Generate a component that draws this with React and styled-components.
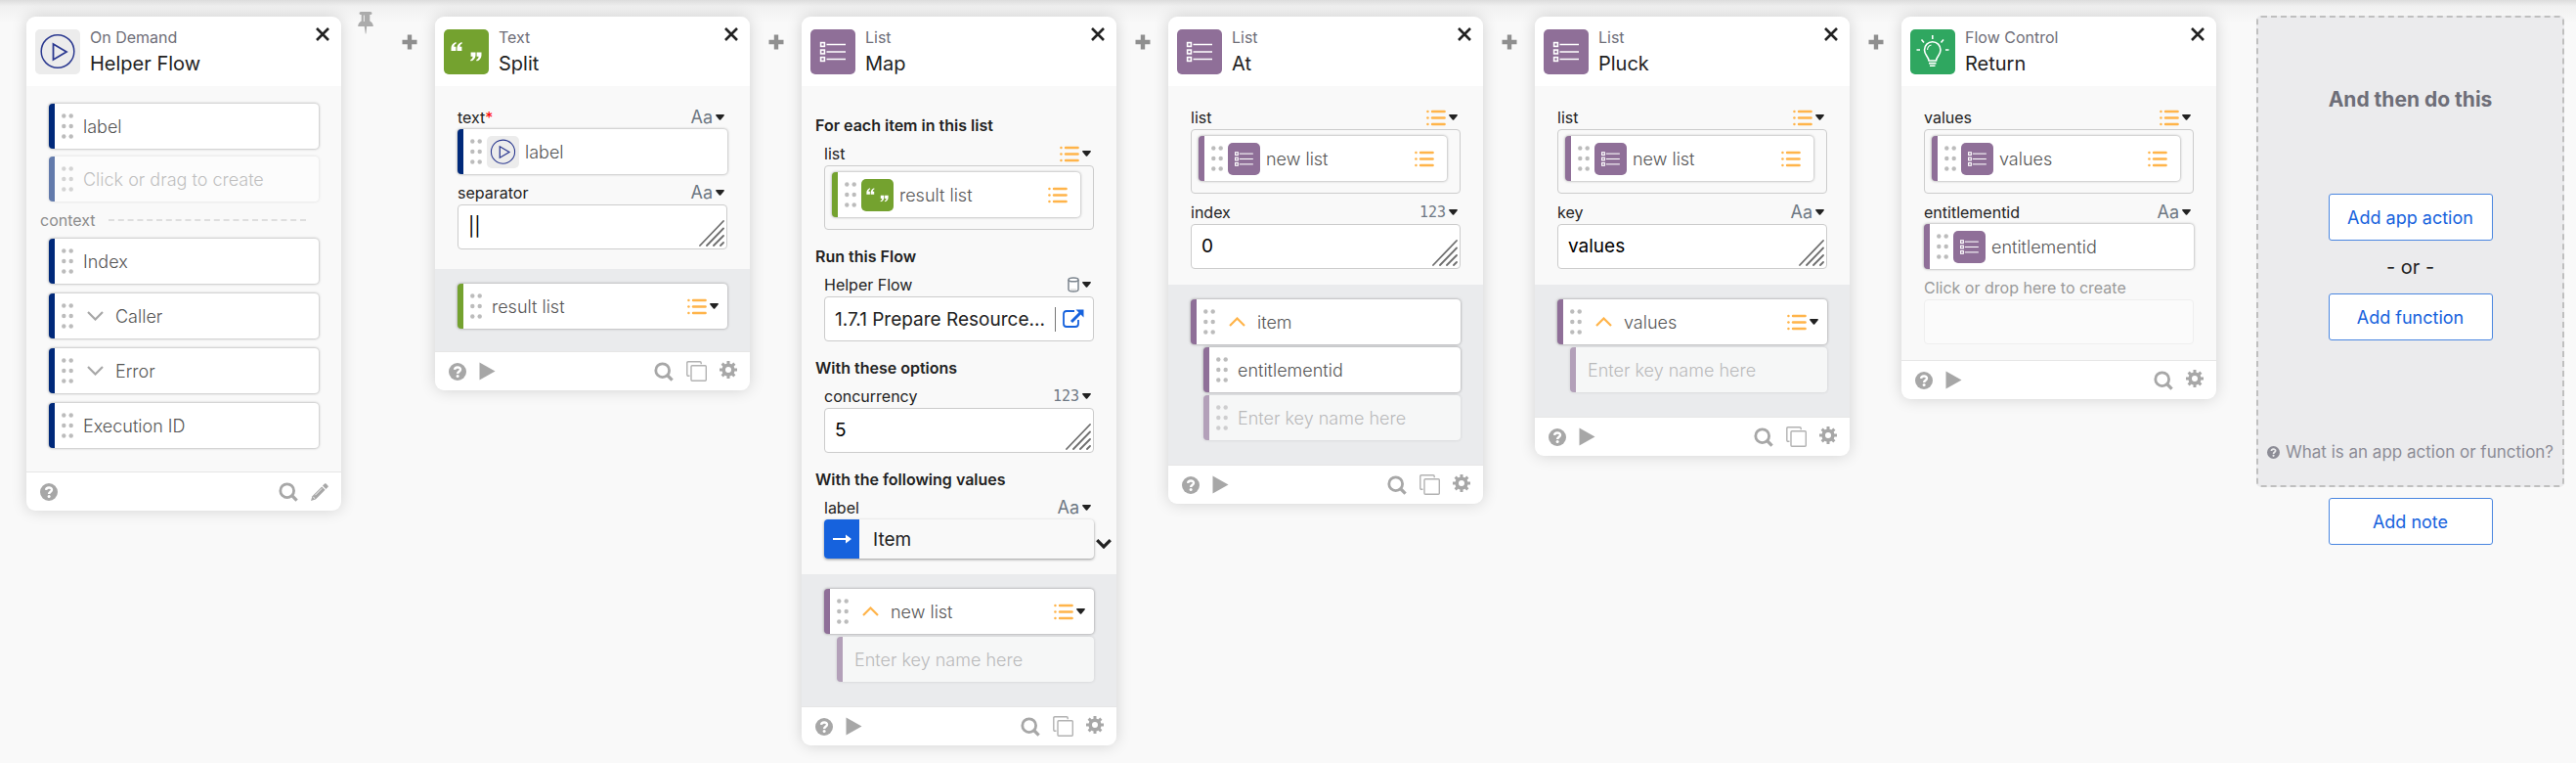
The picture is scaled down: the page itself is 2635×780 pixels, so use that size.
import React from "react";
import styled, { createGlobalStyle, css } from "styled-components";

const NAVY = "#00297a";
const GREEN = "#74a22f";
const PURPLE = "#8f6f98";
const ORANGE = "#ffb44a";
const BLUE = "#1662dd";
const GREY = "#a7a7a7";

const GlobalStyle = createGlobalStyle`
  *, *::before, *::after { box-sizing: border-box; }
  body {
    margin: 0;
    background: #f9f9f9;
    color: #222;
    font-family: Inter, "Liberation Sans", sans-serif;
    font-size: 16px;
  }
  button, input, select, textarea { font: inherit; color: inherit; }
  svg { display: block; flex: none; }
`;

/* ---------- page ---------- */

const Page = styled.main`
  min-height: 100vh;
  overflow-x: auto;
  background: linear-gradient(#dcdcdc, #f0f0f0 6px, #f9f9f9 24px);
`;

const Canvas = styled.div`
  display: flex;
  align-items: flex-start;
  padding: 16px 12px 12px 27px;
`;

const Connector = styled.div`
  display: flex;
  justify-content: center;
  flex: none;
  width: 53px;
  padding-top: 19px;
`;

const PinSlot = styled(Connector)`
  width: 43px;
  padding: 0 0 0 6px;
  margin-top: -4px;
`;

const IconButton = styled.button`
  display: flex;
  padding: 0;
  border: 0;
  background: none;
  color: ${GREY};
  cursor: pointer;
`;

/* ---------- card ---------- */

const Card = styled.article`
  flex: none;
  width: 322px;
  margin-top: 1px;
  border-radius: 9px;
  background: #fff;
  box-shadow: 0 0 16px rgba(0, 0, 0, 0.16);
`;

const CardHeader = styled.header`
  display: flex;
  align-items: flex-start;
  gap: 10px;
  height: 71px;
  padding: 13px 12px 0 9px;
`;

const HeaderText = styled.div`
  flex: 1;
  margin-top: -2px;
`;

const Category = styled.div`
  line-height: 20px;
  color: #6e6e78;
`;

const Title = styled.h2`
  margin: 4px 0 0;
  font-size: 20px;
  line-height: 26px;
  font-weight: 400;
`;

const AppIcon = styled.span`
  display: flex;
  align-items: center;
  justify-content: center;
  flex: none;
  width: ${(p) => p.$size}px;
  height: ${(p) => p.$size}px;
  border-radius: 5px;
  background: ${(p) => p.$color};
`;

const CardBody = styled.div`
  padding: 13px 23px ${(p) => p.$bottom || 16}px;
  background: #f9f9f9;
`;

const ContextBody = styled.div`
  display: flex;
  flex-direction: column;
  padding: 18px 23px 24px;
  background: #f9f9f9;
`;

const Outputs = styled.div`
  display: flex;
  flex-direction: column;
  gap: 3px;
  padding: 15px 23px ${(p) => p.$bottom || 25}px;
  background: #eaebed;
`;

const CardFooter = styled.footer`
  display: flex;
  align-items: center;
  gap: 13px;
  height: 40px;
  padding: 0 13px 0 14px;
  border-top: 1px solid #e6e6e6;
`;

const Spacer = styled.span`
  flex: 1;
`;

/* ---------- pills ---------- */

const Pill = styled.div`
  display: flex;
  align-items: center;
  height: 46px;
  margin-left: ${(p) => (p.$nested ? 13 : 0)}px;
  padding: 0 ${(p) => (p.$slot ? 13 : 9)}px 0 7px;
  border-left: 6px solid ${(p) => p.$color};
  border-radius: 4px;
  background: #fff;
  color: #555;
  font-size: 18px;
  font-weight: 300;
  box-shadow: 0 0 3px rgba(0, 0, 0, 0.4);
  ${(p) =>
    p.$ghost &&
    css`
      opacity: 0.6;
      box-shadow: 0 0 3px rgba(0, 0, 0, 0.2);
    `}
`;

const PillName = styled.span`
  flex: 1;
  margin-left: ${(p) => p.$gap}px;
  white-space: nowrap;
`;

const PillInput = styled.input`
  flex: 1;
  min-width: 0;
  margin-left: ${(p) => p.$gap}px;
  padding: 0;
  border: 0;
  outline: 0;
  background: none;
  &::placeholder { color: #999; opacity: 1; }
`;

const PillIcon = styled.span`
  display: flex;
  margin-left: 5px;
`;

const Toggle = styled(IconButton)`
  margin-left: 14px;
`;

const ContextList = styled.div`
  display: flex;
  flex-direction: column;
  gap: ${(p) => p.$gap}px;
`;

const ContextDivider = styled.div`
  display: flex;
  align-items: center;
  gap: 13px;
  height: 38px;
  margin: 0 13px 0 -9px;
  color: #8c8c8c;
  &::after {
    content: "";
    flex: 1;
    border-top: 2px dashed #dedede;
  }
`;

/* ---------- fields ---------- */

const SectionHeading = styled.h3`
  display: flex;
  align-items: flex-end;
  height: 37px;
  margin: 0 0 0 -9px;
  font-size: 16px;
  line-height: 20px;
  font-weight: 600;
`;

const FieldHead = styled.div`
  display: flex;
  align-items: flex-end;
  justify-content: space-between;
  height: 31px;
  padding: 0 3px 2px 0;
  line-height: 20px;
`;

const FieldName = styled.label`
  color: ${(p) => (p.$muted ? "#999" : "#222")};
`;

const Required = styled.span`
  color: #f00;
`;

const TypeButton = styled.button`
  display: flex;
  align-items: center;
  gap: 3px;
  height: 20px;
  padding: 0;
  border: 0;
  background: none;
  color: #6e7883;
  cursor: pointer;
`;

const TextType = styled.span`
  font-size: 18px;
`;

const NumberType = styled.span`
  font-family: "DejaVu Sans Mono", monospace;
  font-size: 15px;
`;

const ListSlot = styled.div`
  height: 66px;
  padding: 6px 13px 0 7px;
  border: 1px solid #ccc;
  border-radius: 4px;
`;

const InputBox = styled.div`
  display: flex;
  align-items: center;
  height: 46px;
  padding: 0 2px 0 10px;
  border: 1px solid #ccc;
  border-radius: 4px;
  background: #fff;
  font-size: 19px;
`;

const ValueArea = styled.textarea`
  flex: 1;
  min-width: 0;
  height: 24px;
  padding: 0;
  border: 0;
  outline: 0;
  resize: none;
  overflow: hidden;
  background: none;
  color: #000;
  line-height: 24px;
`;

const Grip = styled.svg`
  align-self: flex-end;
  margin-bottom: 2px;
`;

const FlowPicker = styled.button`
  flex: 1;
  min-width: 0;
  padding: 0;
  border: 0;
  background: none;
  text-align: left;
  white-space: nowrap;
`;

const OpenLink = styled.a`
  display: flex;
  align-items: center;
  height: 25px;
  padding: 0 7px;
  border-left: 1px solid #777;
  color: ${BLUE};
`;

const ItemBox = styled.div`
  position: relative;
  display: flex;
  height: 40px;
  border-radius: 4px;
  background: #f9f9f9;
  box-shadow: 0 1px 3px rgba(0, 0, 0, 0.4);
`;

const ItemArrow = styled.span`
  display: flex;
  align-items: center;
  justify-content: center;
  width: 36px;
  border-radius: 4px 0 0 4px;
  background: ${BLUE};
`;

const ItemSelect = styled.select`
  flex: 1;
  appearance: none;
  padding: 0 14px;
  border: 0;
  outline: 0;
  background: none;
  font-size: 19px;
`;

const ItemChevron = styled.span`
  position: absolute;
  top: 20px;
  left: calc(100% + 2px);
`;

const DropTarget = styled.input`
  display: block;
  width: 100%;
  height: 46px;
  border: 1px solid #efefef;
  border-radius: 4px;
  outline: 0;
  background: #fbfbfb;
`;

/* ---------- next step ---------- */

const NextStep = styled.section`
  display: flex;
  flex: 1 0 314px;
  flex-direction: column;
  align-items: center;
  gap: 11px;
  margin-left: 41px;
`;

const NextPanel = styled.div`
  display: flex;
  flex-direction: column;
  align-items: center;
  width: 100%;
  padding: 71px 0 23px;
  border: 2px dashed #bfbfbf;
  border-radius: 5px;
  background: #ebebed;
`;

const NextTitle = styled.h2`
  margin: 0 0 83px;
  font-size: 21px;
  line-height: 26px;
  font-weight: 700;
  color: #6e6e78;
`;

const Or = styled.span`
  margin: 14px 0;
  font-size: 20px;
  line-height: 26px;
`;

const OutlineButton = styled.button`
  width: 168px;
  height: 48px;
  padding: 0;
  border: 1px solid #4a86e0;
  border-radius: 3px;
  background: #fff;
  color: ${BLUE};
  font-size: 18px;
  cursor: pointer;
`;

const HelpLink = styled.a`
  display: flex;
  align-items: center;
  gap: 6px;
  margin-top: 103px;
  font-size: 17px;
  line-height: 22px;
  color: #8c8c96;
  text-decoration: none;
  white-space: nowrap;
`;

/* ---------- drawings ---------- */

const CloseIcon = () => (
  <svg width="14" height="14" viewBox="0 0 14 14" stroke="#222" strokeWidth="2.6">
    <path d="M1 1L13 13M13 1L1 13" />
  </svg>
);

const PlusIcon = () => (
  <svg width="16" height="16" viewBox="0 0 16 16" stroke="#8f8f8f" strokeWidth="4.4">
    <path d="M8 0.5V15.5M0.5 8H15.5" />
  </svg>
);

const PinIcon = () => (
  <svg width="16" height="23" viewBox="0 0 16 23" fill="#ababab">
    <path d="M3 0H13A1.2 1.2 0 0 1 13 3H12.3V9.5C14.5 10.8 15.8 12.6 15.8 15H0.2C0.2 12.6 1.5 10.8 3.7 9.5V3H3A1.2 1.2 0 0 1 3 0Z" />
    <path d="M6.7 15H9.2L8.4 22.5H7.8Z" />
    <path d="M5.8 3.5H7V10H5.8Z" fill="#e6e6e6" />
  </svg>
);

const DotsIcon = () => (
  <svg width="12" height="26" viewBox="0 0 12 26" fill="#bcbcbc">
    {[2.5, 13, 23.5].map((y) => (
      <g key={y}>
        <circle cx="2.3" cy={y} r="2.2" />
        <circle cx="9.7" cy={y} r="2.2" />
      </g>
    ))}
  </svg>
);

const ListTypeIcon = () => (
  <svg width="20" height="17" viewBox="0 0 20 17" stroke={ORANGE} strokeWidth="2.4" strokeLinecap="round">
    {[2, 8.5, 15].map((y) => (
      <g key={y}>
        <path d={`M6 ${y}H18.6`} />
        <path d={`M1.4 ${y}H1.5`} />
      </g>
    ))}
  </svg>
);

const Caret = () => (
  <svg width="9" height="6" viewBox="0 0 9 6" fill="#222">
    <path d="M0.9 0H8.1C8.9 0 9.2 0.8 8.7 1.3L5.2 5.4Q4.5 6 3.8 5.4L0.3 1.3C-0.2 0.8 0.1 0 0.9 0Z" />
  </svg>
);

const CylinderIcon = () => (
  <svg width="12" height="16" viewBox="0 0 12 16" fill="#fff" stroke="#7b848d" strokeWidth="1.5">
    <path d="M1 3V12.8C1 15.8 11 15.8 11 12.8V3" />
    <path d="M1 3C1 0.2 11 0.2 11 3C11 5.4 1 5.4 1 3Z" />
    <path d="M3 13H9" stroke="#dcdcdc" />
  </svg>
);

const ChevronDown = () => (
  <svg width="17" height="10" viewBox="0 0 17 10" fill="none" stroke={GREY} strokeWidth="2.2">
    <path d="M1 1L8.5 8.5L16 1" />
  </svg>
);

const ChevronUp = () => (
  <svg width="17" height="10" viewBox="0 0 17 10" fill="none" stroke={ORANGE} strokeWidth="2.2">
    <path d="M1 9L8.5 1.5L16 9" />
  </svg>
);

const BoldChevron = () => (
  <svg width="16" height="10" viewBox="0 0 16 10" fill="none" stroke="#222" strokeWidth="3.2">
    <path d="M1.2 1.2L8 8L14.8 1.2" />
  </svg>
);

const GripIcon = () => (
  <Grip width="26" height="27" viewBox="0 0 26 27" stroke="#6f6f6f" strokeWidth="1.8" strokeLinecap="round">
    <path d="M1 26L25 1M8 26L25 8.5M15 26L25 16M22 26L25 23" />
  </Grip>
);

const ArrowIcon = () => (
  <svg width="19" height="10" viewBox="0 0 19 10" fill="#fff">
    <path d="M0 4H13V0.6L19 5L13 9.4V6H0Z" />
  </svg>
);

const ExternalIcon = () => (
  <svg width="22" height="20" viewBox="0 0 22 20" fill="none" stroke={BLUE}>
    <path d="M12 2H4Q1 2 1 5V15Q1 18 4 18H13Q16 18 16 15V11" strokeWidth="1.8" />
    <path d="M9 13L18 4" strokeWidth="3" />
    <path d="M13.5 0.5H21.5V8.5Z" fill={BLUE} stroke="none" />
  </svg>
);

const QuestionIcon = ({ size = 18, cut = "#fff" }) => (
  <svg width={size} height={size} viewBox="0 0 18 18">
    <circle cx="9" cy="9" r="9" fill="currentColor" />
    <path d="M6.1 6.9C6.3 3.7 12 3.6 12 6.7C12 8.7 9.2 8.7 9.1 11" fill="none" stroke={cut} strokeWidth="2.4" />
    <circle cx="9.1" cy="13.6" r="1.5" fill={cut} />
  </svg>
);

const PlayIcon = () => (
  <svg width="17" height="19" viewBox="0 0 17 19" fill="currentColor">
    <path d="M0.5 0.5L16.5 9.5L0.5 18.5Z" />
  </svg>
);

const SearchIcon = () => (
  <svg width="20" height="20" viewBox="0 0 20 20" fill="none" stroke="currentColor" strokeWidth="2.8">
    <circle cx="8.7" cy="8.7" r="6.9" />
    <path d="M13.5 13.5L18.6 18.6" strokeWidth="3.2" />
  </svg>
);

const CopyIcon = () => (
  <svg width="21" height="21" viewBox="0 0 21 21" fill="none" stroke="#b2b2b2" strokeWidth="1.4">
    <path d="M3.5 15.2H2Q0.8 15.2 0.8 14V2Q0.8 0.8 2 0.8H14Q15.2 0.8 15.2 2V3.2" />
    <rect x="5" y="4.8" width="15.3" height="15.4" rx="1" />
  </svg>
);

const GearIcon = () => (
  <svg width="18" height="22" viewBox="0 0 18 22" fill="none" stroke="currentColor">
    <circle cx="9" cy="9" r="4.8" strokeWidth="3.6" />
    {[0, 45, 90, 135].map((a) => (
      <path key={a} d="M9 0V3.6M9 14.4V18" strokeWidth="3" transform={`rotate(${a} 9 9)`} />
    ))}
  </svg>
);

const PencilIcon = () => (
  <svg width="18" height="18" viewBox="0 0 18 18" fill="currentColor">
    <path d="M12 2.6L15.4 6L17.4 4Q18.2 3.2 17.4 2.4L15.6 0.6Q14.8 -0.2 14 0.6Z" />
    <path d="M11.2 3.4L14.6 6.8L4.8 16.6L0 18L1.4 13.2Z" />
    <path d="M11.2 5.4L4.4 12.2M2.2 13.8L4.2 15.8" stroke="#fff" strokeWidth="0.9" />
  </svg>
);

const PlayCircle = ({ size }) => (
  <svg width={size} height={size} viewBox="0 0 46 46" fill="none" stroke="#2b3990" strokeWidth="1.5">
    <circle cx="23" cy="22.5" r="16.8" />
    <path d="M18.5 15V31L32 23Z" strokeWidth="1.8" />
  </svg>
);

const QUOTE_MARK = "M4.8 0C2 0.9 0 3.2 0 6.1V9H4.9V4.7H2.9C2.9 3.1 3.7 2 5.4 1.2Z";

const Quotes = ({ size }) => (
  <svg width={size} height={size} viewBox="0 0 46 46" fill="#fff">
    <path d={QUOTE_MARK} transform="translate(7.5 13)" />
    <path d={QUOTE_MARK} transform="translate(13.5 13)" />
    <path d={QUOTE_MARK} transform="translate(32.5 32.5) rotate(180)" />
    <path d={QUOTE_MARK} transform="translate(38.5 32.5) rotate(180)" />
  </svg>
);

const ListGlyph = ({ size }) => (
  <svg width={size} height={size} viewBox="0 0 46 46" fill="none" stroke="#fff">
    {[15.5, 23, 30.5].map((y) => (
      <g key={y}>
        <rect x="10.6" y={y - 1.9} width="3.8" height="3.8" strokeWidth="1.6" />
        <path d={`M16.5 ${y}H36`} strokeWidth="1.5" />
      </g>
    ))}
  </svg>
);

const Bulb = ({ size }) => (
  <svg width={size} height={size} viewBox="0 0 46 46" fill="none" stroke="#fff" strokeWidth="1.6">
    <path d="M19 32C19 28 14.5 26.5 14.5 21A8.2 8.2 0 0 1 31 21C31 26.5 26.5 28 26.5 32Z" />
    <path d="M17.6 21A5.2 5.2 0 0 1 21.5 16" strokeWidth="1.1" />
    <path d="M19 34.6H26.5M20 37.2H25.5" />
    <path d="M22.8 6V10M11.5 10.5L14 13.5M34 10.5L31.5 13.5M6.5 21H10M36 21H39.5" />
  </svg>
);

const APPS = {
  flow: { color: "#ececec", accent: NAVY, Glyph: PlayCircle },
  text: { color: GREEN, accent: GREEN, Glyph: Quotes },
  list: { color: PURPLE, accent: PURPLE, Glyph: ListGlyph },
  control: { color: "#2fa760", accent: "#2fa760", Glyph: Bulb },
};

/* ---------- composed parts ---------- */

function AppTile({ app, size = 46 }) {
  const { color, Glyph } = APPS[app];
  return (
    <AppIcon $size={size} $color={color}>
      <Glyph size={size} />
    </AppIcon>
  );
}

const CloseButton = styled(IconButton)`
  margin-top: -2px;
`;

function Header({ app, category, title }) {
  return (
    <CardHeader>
      <AppTile app={app} />
      <HeaderText>
        <Category>{category}</Category>
        <Title>{title}</Title>
      </HeaderText>
      <CloseButton type="button" aria-label={`Close ${title}`}>
        <CloseIcon />
      </CloseButton>
    </CardHeader>
  );
}

function Footer({ play = true, copy = true, edit = false }) {
  return (
    <CardFooter>
      <IconButton type="button" aria-label="Help"><QuestionIcon /></IconButton>
      {play && <IconButton type="button" aria-label="Test"><PlayIcon /></IconButton>}
      <Spacer />
      <IconButton type="button" aria-label="Search"><SearchIcon /></IconButton>
      {copy && <IconButton type="button" aria-label="Duplicate"><CopyIcon /></IconButton>}
      {edit ? (
        <IconButton type="button" aria-label="Edit"><PencilIcon /></IconButton>
      ) : (
        <IconButton type="button" aria-label="Settings"><GearIcon /></IconButton>
      )}
    </CardFooter>
  );
}

const TYPE_MARKS = {
  text: <TextType>Aa</TextType>,
  number: <NumberType>123</NumberType>,
  list: <ListTypeIcon />,
  object: <CylinderIcon />,
};

function TypePicker({ type }) {
  return (
    <TypeButton type="button" aria-label={`Type: ${type}`}>
      {TYPE_MARKS[type]}
      <Caret />
    </TypeButton>
  );
}

function FieldLabel({ id, name, type, required }) {
  return (
    <FieldHead>
      <FieldName htmlFor={id}>
        {name}
        {required && <Required>*</Required>}
      </FieldName>
      <TypePicker type={type} />
    </FieldHead>
  );
}

function ValueField({ id, name, type, value }) {
  return (
    <>
      <FieldLabel id={id} name={name} type={type} />
      <InputBox>
        <ValueArea id={id} rows={1} defaultValue={value} />
        <GripIcon />
      </InputBox>
    </>
  );
}

function DataPill({ color, name, app, toggle, listType, slot, nested }) {
  const gap = app ? 6 : toggle ? 12 : 10;
  return (
    <Pill $color={color} $nested={nested} $slot={slot}>
      <DotsIcon />
      {app && <PillIcon><AppTile app={app} size={33} /></PillIcon>}
      {toggle && (
        <Toggle type="button" aria-label={`Toggle ${name}`}>
          {toggle === "up" ? <ChevronUp /> : <ChevronDown />}
        </Toggle>
      )}
      <PillName $gap={gap}>{name}</PillName>
      {listType && (slot ? <ListTypeIcon /> : <TypePicker type="list" />)}
    </Pill>
  );
}

function GhostPill({ color, text, dots, nested }) {
  return (
    <Pill $color={color} $nested={nested} $ghost>
      {dots && <DotsIcon />}
      <PillInput $gap={dots ? 10 : 5} placeholder={text} aria-label={text} />
    </Pill>
  );
}

function ListField({ name, app, item }) {
  return (
    <>
      <FieldLabel name={name} type="list" />
      <ListSlot>
        <DataPill color={APPS[app].accent} app={app} name={item} listType slot />
      </ListSlot>
    </>
  );
}

function AddStep() {
  return (
    <Connector>
      <IconButton type="button" aria-label="Add step"><PlusIcon /></IconButton>
    </Connector>
  );
}

export default function App() {
  return (
    <Page>
      <GlobalStyle />
      <Canvas>
        <Card>
          <Header app="flow" category="On Demand" title="Helper Flow" />
          <ContextBody>
            <ContextList $gap={8}>
              <DataPill color={NAVY} name="label" />
              <GhostPill color={NAVY} text="Click or drag to create" dots />
            </ContextList>
            <ContextDivider>context</ContextDivider>
            <ContextList $gap={10}>
              <DataPill color={NAVY} name="Index" />
              <DataPill color={NAVY} name="Caller" toggle="down" />
              <DataPill color={NAVY} name="Error" toggle="down" />
              <DataPill color={NAVY} name="Execution ID" />
            </ContextList>
          </ContextBody>
          <Footer play={false} copy={false} edit />
        </Card>
        <PinSlot>
          <IconButton type="button" aria-label="Pin"><PinIcon /></IconButton>
        </PinSlot>

        <AddStep />
        <Card>
          <Header app="text" category="Text" title="Split" />
          <CardBody $bottom={20}>
            <FieldLabel name="text" type="text" required />
            <DataPill color={NAVY} app="flow" name="label" />
            <ValueField id="separator" name="separator" type="text" value="||" />
          </CardBody>
          <Outputs $bottom={23}>
            <DataPill color={GREEN} name="result list" listType />
          </Outputs>
          <Footer />
        </Card>

        <AddStep />
        <Card>
          <Header app="list" category="List" title="Map" />
          <CardBody>
            <SectionHeading>For each item in this list</SectionHeading>
            <ListField name="list" app="text" item="result list" />
            <SectionHeading>Run this Flow</SectionHeading>
            <FieldLabel id="helper-flow" name="Helper Flow" type="object" />
            <InputBox>
              <FlowPicker id="helper-flow" type="button">1.7.1 Prepare Resource...</FlowPicker>
              <OpenLink href="#open-flow" aria-label="Open flow"><ExternalIcon /></OpenLink>
            </InputBox>
            <SectionHeading>With these options</SectionHeading>
            <ValueField id="concurrency" name="concurrency" type="number" value="5" />
            <SectionHeading>With the following values</SectionHeading>
            <FieldLabel id="item-label" name="label" type="text" />
            <ItemBox>
              <ItemArrow><ArrowIcon /></ItemArrow>
              <ItemSelect id="item-label" defaultValue="Item">
                <option>Item</option>
              </ItemSelect>
              <ItemChevron><BoldChevron /></ItemChevron>
            </ItemBox>
          </CardBody>
          <Outputs>
            <DataPill color={PURPLE} name="new list" toggle="up" listType />
            <GhostPill color={PURPLE} text="Enter key name here" nested />
          </Outputs>
          <Footer />
        </Card>

        <AddStep />
        <Card>
          <Header app="list" category="List" title="At" />
          <CardBody>
            <ListField name="list" app="list" item="new list" />
            <ValueField id="index" name="index" type="number" value="0" />
          </CardBody>
          <Outputs>
            <DataPill color={PURPLE} name="item" toggle="up" />
            <DataPill color={PURPLE} name="entitlementid" nested />
            <GhostPill color={PURPLE} text="Enter key name here" dots nested />
          </Outputs>
          <Footer />
        </Card>

        <AddStep />
        <Card>
          <Header app="list" category="List" title="Pluck" />
          <CardBody>
            <ListField name="list" app="list" item="new list" />
            <ValueField id="key" name="key" type="text" value="values" />
          </CardBody>
          <Outputs>
            <DataPill color={PURPLE} name="values" toggle="up" listType />
            <GhostPill color={PURPLE} text="Enter key name here" nested />
          </Outputs>
          <Footer />
        </Card>

        <AddStep />
        <Card>
          <Header app="control" category="Flow Control" title="Return" />
          <CardBody>
            <ListField name="values" app="list" item="values" />
            <FieldLabel name="entitlementid" type="text" />
            <DataPill color={PURPLE} app="list" name="entitlementid" />
            <FieldHead>
              <FieldName htmlFor="new-value" $muted>Click or drop here to create</FieldName>
            </FieldHead>
            <DropTarget id="new-value" />
          </CardBody>
          <Footer copy={false} />
        </Card>

        <NextStep>
          <NextPanel>
            <NextTitle>And then do this</NextTitle>
            <OutlineButton type="button">Add app action</OutlineButton>
            <Or>- or -</Or>
            <OutlineButton type="button">Add function</OutlineButton>
            <HelpLink href="#help">
              <QuestionIcon size={13} cut="#ebebed" />
              What is an app action or function?
            </HelpLink>
          </NextPanel>
          <OutlineButton type="button">Add note</OutlineButton>
        </NextStep>
      </Canvas>
    </Page>
  );
}
